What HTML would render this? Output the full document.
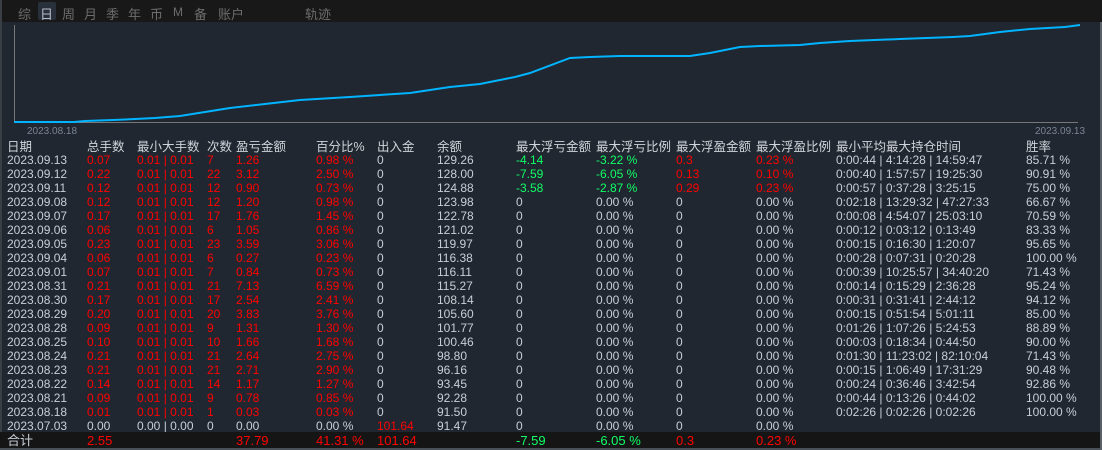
<!DOCTYPE html><html><head><meta charset="utf-8"><style>
body{margin:0;width:1102px;height:450px;background:#202731;overflow:hidden;position:relative;font-family:"Liberation Sans","Noto Sans CJK SC",sans-serif;font-size:12px;color:#c9ced6}
#top{position:absolute;left:0;top:0;width:1102px;height:22px;background:#181818}
#top span{position:absolute;top:4px;font-size:13px;color:#6d6d6d}
.r{position:absolute;left:0;width:1100px;height:14px;line-height:14px;white-space:nowrap}
.r span{position:absolute;top:0}
.h{font-size:12.5px;color:#d0d4da}
.red{color:#f00}.grn{color:#1f6}
#tot{position:absolute;left:0;top:432px;width:1100px;height:18px;background:#151515}
</style></head><body>
<div id="top">
<span style="left:18px">综</span>
<span style="left:38px;top:2px;width:18px;height:18px;background:#27303b;border-radius:2px"></span>
<span style="left:40px;color:#b8bec8">日</span>
<span style="left:62px">周</span><span style="left:84px">月</span><span style="left:106px">季</span><span style="left:128px">年</span><span style="left:150px">币</span><span style="left:173px;font-size:12px;top:5px">M</span><span style="left:194px">备</span><span style="left:218px">账户</span><span style="left:305px">轨迹</span>
</div>
<div style="position:absolute;left:0;top:0;width:2px;height:450px;background:#3a3f46"></div>
<div style="position:absolute;left:1100px;top:22px;width:2px;height:428px;background:#5a6068"></div>
<svg style="position:absolute;left:0;top:0" width="1102" height="140">
<line x1="14.5" y1="25" x2="14.5" y2="122" stroke="#777" stroke-width="1"/>
<line x1="14" y1="122.5" x2="1078" y2="122.5" stroke="#777" stroke-width="1"/>
<polyline fill="none" stroke="#00b4ff" stroke-width="2" points="14,122 74,122 85,121 113,120 135,119 155,118 180,116 230,108 300,100 350,97 380,95 410,93 450,87 480,84 515,77 530,73 570,58 590,57 620,56 690,56 710,53 740,47 760,46 800,45 820,43 850,41 900,39 953,37 970,36 1000,32 1030,29 1065,27 1080,25"/>
<text x="27" y="134" fill="#7a8594" font-size="10" font-family="Liberation Sans">2023.08.18</text>
<text x="1035" y="134" fill="#7a8594" font-size="10" font-family="Liberation Sans">2023.09.13</text>
</svg>
<div class="r h" style="top:140px"><span style="left:7px">日期</span><span style="left:87px">总手数</span><span style="left:137px">最小大手数</span><span style="left:207px">次数</span><span style="left:236px">盈亏金额</span><span style="left:316px">百分比%</span><span style="left:377px">出入金</span><span style="left:437px">余额</span><span style="left:516px">最大浮亏金额</span><span style="left:596px">最大浮亏比例</span><span style="left:676px">最大浮盈金额</span><span style="left:756px">最大浮盈比例</span><span style="left:836px">最小平均最大持仓时间</span><span style="left:1026px">胜率</span></div>
<div id="rows"></div>
<div id="tot"></div>
<div style="position:absolute;left:0;top:448px;width:1100px;height:2px;background:#4a5058"></div>
<div class="r" style="top:434px;font-size:13px"><span style="left:7px">合计</span><span class="red" style="left:87px">2.55</span><span class="red" style="left:236px">37.79</span><span class="red" style="left:316px">41.31 %</span><span class="red" style="left:377px">101.64</span><span class="grn" style="left:516px">-7.59</span><span class="grn" style="left:596px">-6.05 %</span><span class="red" style="left:676px">0.3</span><span class="red" style="left:756px">0.23 %</span></div>
<script>
const d=[
["2023.09.13","0.07","7","1.26","0.98 %","129.26","-4.14","-3.22 %","0.3","0.23 %","0:00:44 | 4:14:28 | 14:59:47","85.71 %"],
["2023.09.12","0.22","22","3.12","2.50 %","128.00","-7.59","-6.05 %","0.13","0.10 %","0:00:40 | 1:57:57 | 19:25:30","90.91 %"],
["2023.09.11","0.12","12","0.90","0.73 %","124.88","-3.58","-2.87 %","0.29","0.23 %","0:00:57 | 0:37:28 | 3:25:15","75.00 %"],
["2023.09.08","0.12","12","1.20","0.98 %","123.98","0","0.00 %","0","0.00 %","0:02:18 | 13:29:32 | 47:27:33","66.67 %"],
["2023.09.07","0.17","17","1.76","1.45 %","122.78","0","0.00 %","0","0.00 %","0:00:08 | 4:54:07 | 25:03:10","70.59 %"],
["2023.09.06","0.06","6","1.05","0.86 %","121.02","0","0.00 %","0","0.00 %","0:00:12 | 0:03:12 | 0:13:49","83.33 %"],
["2023.09.05","0.23","23","3.59","3.06 %","119.97","0","0.00 %","0","0.00 %","0:00:15 | 0:16:30 | 1:20:07","95.65 %"],
["2023.09.04","0.06","6","0.27","0.23 %","116.38","0","0.00 %","0","0.00 %","0:00:28 | 0:07:31 | 0:20:28","100.00 %"],
["2023.09.01","0.07","7","0.84","0.73 %","116.11","0","0.00 %","0","0.00 %","0:00:39 | 10:25:57 | 34:40:20","71.43 %"],
["2023.08.31","0.21","21","7.13","6.59 %","115.27","0","0.00 %","0","0.00 %","0:00:14 | 0:15:29 | 2:36:28","95.24 %"],
["2023.08.30","0.17","17","2.54","2.41 %","108.14","0","0.00 %","0","0.00 %","0:00:31 | 0:31:41 | 2:44:12","94.12 %"],
["2023.08.29","0.20","20","3.83","3.76 %","105.60","0","0.00 %","0","0.00 %","0:00:15 | 0:51:54 | 5:01:11","85.00 %"],
["2023.08.28","0.09","9","1.31","1.30 %","101.77","0","0.00 %","0","0.00 %","0:01:26 | 1:07:26 | 5:24:53","88.89 %"],
["2023.08.25","0.10","10","1.66","1.68 %","100.46","0","0.00 %","0","0.00 %","0:00:03 | 0:18:34 | 0:44:50","90.00 %"],
["2023.08.24","0.21","21","2.64","2.75 %","98.80","0","0.00 %","0","0.00 %","0:01:30 | 11:23:02 | 82:10:04","71.43 %"],
["2023.08.23","0.21","21","2.71","2.90 %","96.16","0","0.00 %","0","0.00 %","0:00:15 | 1:06:49 | 17:31:29","90.48 %"],
["2023.08.22","0.14","14","1.17","1.27 %","93.45","0","0.00 %","0","0.00 %","0:00:24 | 0:36:46 | 3:42:54","92.86 %"],
["2023.08.21","0.09","9","0.78","0.85 %","92.28","0","0.00 %","0","0.00 %","0:00:44 | 0:13:26 | 0:44:02","100.00 %"],
["2023.08.18","0.01","1","0.03","0.03 %","91.50","0","0.00 %","0","0.00 %","0:02:26 | 0:02:26 | 0:02:26","100.00 %"]];
let h="";
d.forEach((r,i)=>{const y=153+i*14;const neg=r[6]!="0";
h+=`<div class="r" style="top:${y}px"><span style="left:7px">${r[0]}</span><span class="red" style="left:87px">${r[1]}</span><span class="red" style="left:137px">0.01 | 0.01</span><span class="red" style="left:207px">${r[2]}</span><span class="red" style="left:236px">${r[3]}</span><span class="red" style="left:316px">${r[4]}</span><span style="left:377px">0</span><span style="left:437px">${r[5]}</span><span class="${neg?'grn':''}" style="left:516px">${r[6]}</span><span class="${neg?'grn':''}" style="left:596px">${r[7]}</span><span class="${neg?'red':''}" style="left:676px">${r[8]}</span><span class="${neg?'red':''}" style="left:756px">${r[9]}</span><span style="left:836px">${r[10]}</span><span style="left:1026px">${r[11]}</span></div>`;});
h+=`<div class="r" style="top:419px"><span style="left:7px">2023.07.03</span><span style="left:87px">0.00</span><span style="left:137px">0.00 | 0.00</span><span style="left:207px">0</span><span style="left:236px">0.00</span><span style="left:316px">0.00 %</span><span class="red" style="left:377px">101.64</span><span style="left:437px">91.47</span><span style="left:516px">0</span><span style="left:596px">0.00 %</span><span style="left:676px">0</span><span style="left:756px">0.00 %</span></div>`;
document.getElementById("rows").innerHTML=h;
</script>
</body></html>
